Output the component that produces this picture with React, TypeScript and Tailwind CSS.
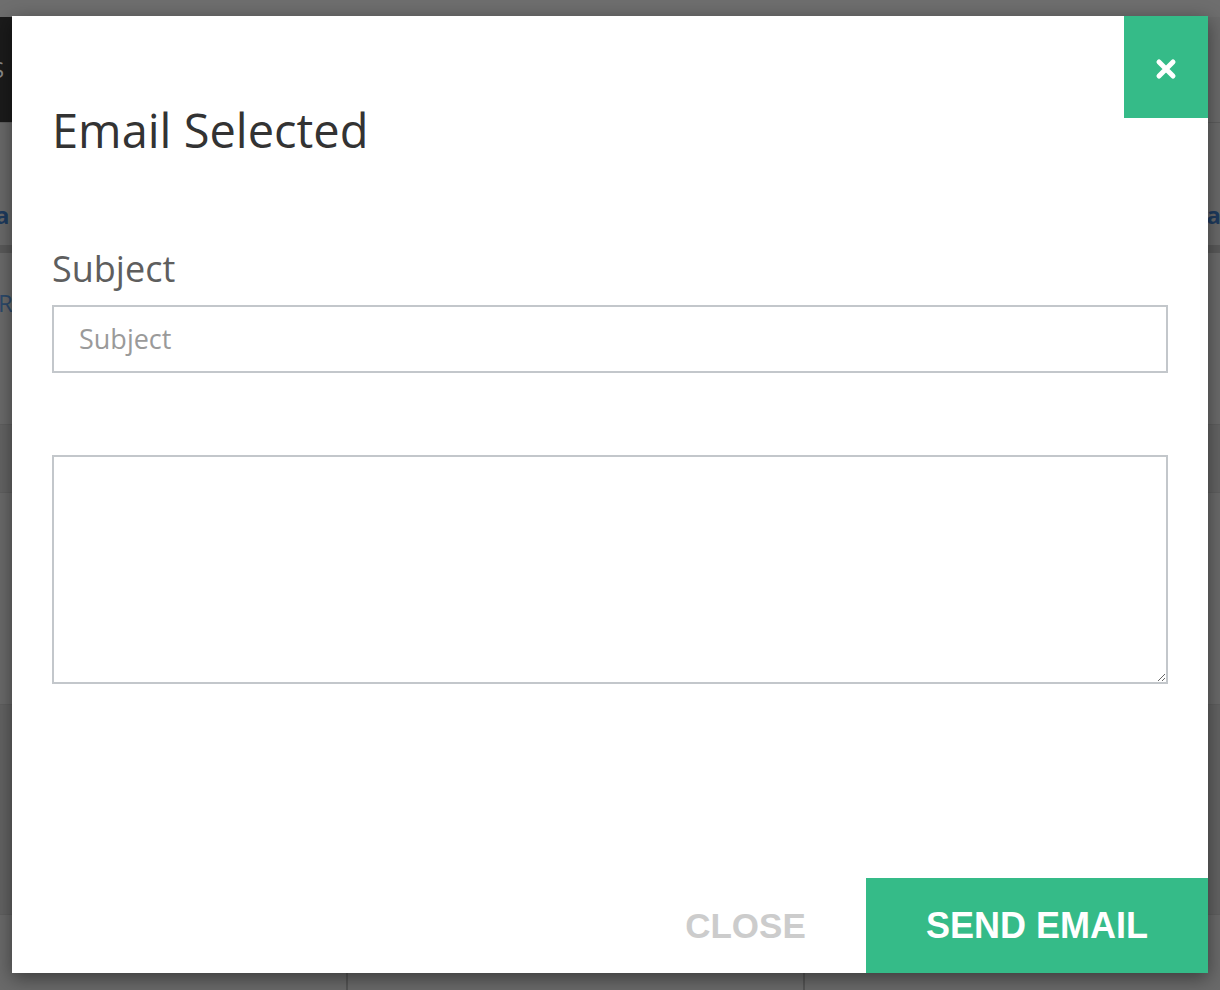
import { useState } from "react";

function Backdrop() {
  return (
    <div className="flex flex-col h-[990px] w-full overflow-hidden font-['Open_Sans',sans-serif]">
      <div className="h-[17px] bg-[#6e6e6e]" />
      <div className="h-[105px] flex">
        <div className="w-[300px] bg-[#1b1b1b] flex items-center text-[22px] text-[#8c8c8c] -indent-[8px]">S</div>
        <div className="flex-1 bg-[#6a6a6a]" />
      </div>
      <div className="h-px bg-[#5d5d5d]" />
      <div className="h-[122px] bg-[#6a6a6a] flex items-end justify-between pb-[18px] text-[24px] font-bold text-[#1e3b5e] leading-none">
        <span className="-ml-[5px]">a</span>
        <span className="-mr-[1px]">na</span>
      </div>
      <div className="h-[8px] bg-[#5a5a5a]" />
      <div className="h-[171px] bg-[#6b6b6b] pt-[38px] text-[24px] text-[#2c4a6c] leading-none">
        <span className="-ml-[2px]">Re</span>
      </div>
      <div className="h-px bg-[#5f5f5f]" />
      <div className="h-[67px] bg-[#646464]" />
      <div className="h-px bg-[#5f5f5f]" />
      <div className="h-[211px] bg-[#6a6a6a]" />
      <div className="h-px bg-[#5f5f5f]" />
      <div className="h-[209px] bg-[#636363]" />
      <div className="h-px bg-[#5f5f5f]" />
      <div className="flex-1 bg-[#6a6a6a] flex">
        <div className="w-[348px] border-r-2 border-[#555]" />
        <div className="w-[457px] border-r-2 border-[#555]" />
        <div className="flex-1" />
      </div>
    </div>
  );
}

function CloseIcon() {
  return (
    <svg width="24" height="24" viewBox="0 0 24 24" fill="none">
      <path d="M5 5 L19 19 M19 5 L5 19" stroke="#fff" strokeWidth="5" strokeLinecap="round" />
    </svg>
  );
}

function EmailModal() {
  const [subject, setSubject] = useState("");
  const [body, setBody] = useState("");

  return (
    <div className="absolute left-[12px] top-[16px] w-[1196px] h-[957px] bg-white shadow-[0_5px_18px_rgba(0,0,0,0.45)] flex flex-col font-['Open_Sans',sans-serif]">
      {/* corner close */}
      <button className="absolute right-0 top-0 w-[84px] h-[102px] bg-[#35bb88] flex items-center justify-center pt-[4px]">
        <CloseIcon />
      </button>

      <div className="pl-[40px] pr-[40px] pt-[79px]">
        <h2 className="text-[47px] text-[#333] font-normal">Email Selected</h2>

        <label className="block mt-[76px] text-[36px] text-[#5e5e5e]">Subject</label>
        <input
          value={subject}
          onChange={(e) => setSubject(e.target.value)}
          placeholder="Subject"
          className="mt-[9px] block w-[1116px] h-[68px] border-2 border-[#c3c7cb] px-[25px] text-[27px] text-[#333] placeholder:text-[#9a9a9a] outline-none"
        />

        <textarea
          value={body}
          onChange={(e) => setBody(e.target.value)}
          className="mt-[82px] block w-[1116px] h-[229px] border-2 border-[#c3c7cb] px-[25px] py-[12px] text-[27px] text-[#333] outline-none"
        />
      </div>

      <div className="mt-auto flex justify-end font-['Liberation_Sans',Arial,sans-serif] font-bold text-[35px] leading-none">
        <button className="h-[95px] w-[241px] text-[#cccccc]">CLOSE</button>
        <button className="h-[95px] w-[342px] bg-[#35bb88] text-white text-[36px]">SEND EMAIL</button>
      </div>
    </div>
  );
}

export default function App() {
  return (
    <div className="relative w-full h-[990px] overflow-hidden">
      <Backdrop />
      <EmailModal />
    </div>
  );
}
